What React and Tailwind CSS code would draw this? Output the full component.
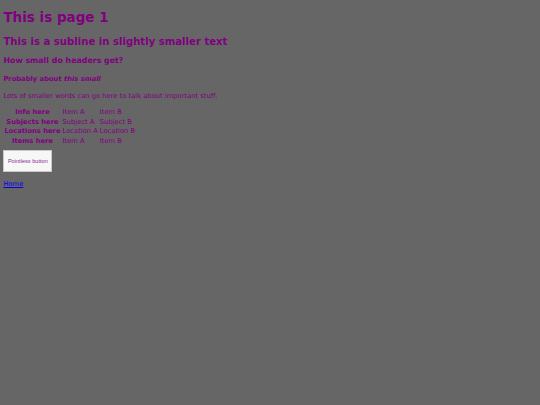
export default function App() {
  const rows = [
    ['Info here', 'Item A', 'Item B'],
    ['Subjects here', 'Subject A', 'Subject B'],
    ['Locations here', 'Location A', 'Location B'],
    ['Items here', 'Item A', 'Item B'],
  ];

  return (
    <div className="min-h-screen bg-[#666666] text-[#800080] text-[6.75px] leading-[1.164] font-['DejaVu_Sans',sans-serif] px-[3.375px] pt-px pb-[3.375px]">
      <h1 className="text-[2em] font-bold mt-[0.67em] mb-[0.75em]">This is page 1</h1>
      <h2 className="text-[1.5em] font-bold mt-[0.83em] mb-[0.83em]">This is a subline in slightly smaller text</h2>
      <h3 className="text-[1.17em] font-bold my-[1em]">How small do headers get?</h3>
      <h4 className="text-[1em] font-bold mt-[1.62em] mb-[1.33em]">
        Probably about <em>this small</em>
      </h4>
      <p className="mt-[1em] mb-[1em]">Lots of smaller words can go here to talk about important stuff.</p>

      <table className="border-separate border-spacing-x-0 border-spacing-y-[1px]">
        <tbody>
          {rows.map(([head, a, b], i) => (
            <tr key={i}>
              <th className="px-px py-[0.45px] font-bold text-center">{head}</th>
              <td className="px-px py-[0.45px]">{a}</td>
              <td className="px-px py-[0.45px]">{b}</td>
            </tr>
          ))}
        </tbody>
      </table>

      <div className="mt-[0.45em] mb-[1.3em]">
        <button className="bg-[#f7f7f7] border border-[#c8c8c8] text-[#8a2a90] text-[5.625px] leading-[1.15] font-['Liberation_Sans',Arial,sans-serif] px-[3.5px] py-[6.5px]">
          Pointless button
        </button>
      </div>

      <p className="my-[1em]">
        <a href="#" className="text-[#0000ee] underline">Home</a>
      </p>
    </div>
  );
}
